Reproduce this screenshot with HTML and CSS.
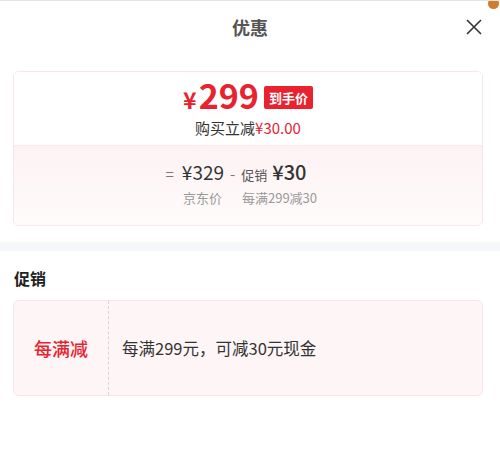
FILE: index.html
```html
<!DOCTYPE html>
<html lang="zh">
<head>
<meta charset="UTF-8">
<meta name="viewport" content="width=device-width">
<title>优惠</title>
<link rel="stylesheet" href="styles.css">
</head>
<body>
<div class="panel">
  <span class="dot"></span>
  <div class="head">
    <h3>优惠</h3>
    <svg class="close" width="18" height="18" viewBox="0 0 18 18">
      <path d="M2 2 L16 16 M16 2 L2 16" stroke="#333" stroke-width="1.6" fill="none"/>
    </svg>
  </div>

  <div class="price-card">
    <div class="final">
      <div class="final-row">
        <span class="big"><span class="yen">¥</span>299</span>
        <span class="tag">到手价</span>
      </div>
      <div class="save">购买立减<em>¥30.00</em></div>
    </div>
    <div class="calc">
      <div class="calc-row">
        <span class="op eq">=</span>
        <span class="num">¥329</span>
        <span class="op minus">-</span>
        <span class="lbl">促销</span>
        <span class="num strong">¥30</span>
      </div>
      <div class="calc-sub">
        <span class="jd">京东价</span>
        <span>每满299减30</span>
      </div>
    </div>
  </div>

  <div class="band"></div>

  <div class="sec-title">促销</div>
  <div class="promo">
    <div class="promo-type">每满减</div>
    <div class="promo-desc">每满299元，可减30元现金</div>
  </div>
</div>
</body>
</html>
```

FILE: styles.css
```css
body {
  margin: 0;
  background-color: #ffffff;
  font-family: "Noto Sans CJK SC", "Noto Sans", sans-serif;
  color: #333333;
}
.panel {
  position: relative;
  width: 500px;
  height: 455px;
  border-top: 1px solid #e4e4e4;
  overflow: hidden;
}
.dot {
  position: absolute;
  top: -3px;
  right: 1px;
  width: 11px;
  height: 11px;
  border-radius: 50%;
  background-color: #d17c2a;
}
.head {
  position: relative;
  height: 51px;
  display: flex;
  align-items: center;
  justify-content: center;
}
.head h3 {
  margin: 0;
  font-size: 18px;
  font-weight: bold;
  color: #555555;
}
.close {
  position: absolute;
  right: 17px;
  top: 17px;
}
.price-card {
  margin: 19px 17px 0 13px;
  border: 1px solid #f8e6e8;
  border-radius: 6px;
  overflow: hidden;
}
.final {
  height: 73px;
  box-sizing: border-box;
  padding-top: 8px;
  display: flex;
  flex-direction: column;
  align-items: center;
  background-color: #ffffff;
}
.final-row {
  display: flex;
  align-items: center;
  height: 34px;
  margin-bottom: 4px;
}
.big {
  color: #e8222f;
  font-size: 34px;
  font-weight: bold;
  line-height: 34px;
}
.yen {
  font-size: 23px;
  margin-right: 2px;
}
.tag {
  margin-left: 5px;
  background-color: #e8222f;
  color: #ffffff;
  font-size: 13px;
  font-weight: bold;
  padding: 0 5px;
  height: 23px;
  line-height: 23px;
  border-radius: 2px;
}
.save {
  font-size: 15px;
  line-height: 20px;
  color: #333333;
}
.save em {
  font-style: normal;
  color: #e8222f;
}
.calc {
  height: 80px;
  box-sizing: border-box;
  padding-bottom: 4px;
  display: flex;
  flex-direction: column;
  align-items: center;
  justify-content: center;
  background: linear-gradient(#fdf2f3, #fffbfb);
  border-top: 1px solid #fbecee;
}
.calc-row {
  display: flex;
  align-items: baseline;
  line-height: 26px;
  margin-right: 24px;
}
.op {
  color: #777777;
  font-size: 15px;
}
.eq {
  margin-right: 8px;
}
.minus {
  margin: 0 6px;
}
.num {
  font-size: 19px;
  color: #333333;
}
.strong {
  font-size: 20px;
  font-weight: 500;
  margin-left: 5px;
}
.lbl {
  font-size: 13px;
  color: #555555;
}
.calc-sub {
  display: flex;
  gap: 20px;
  font-size: 13px;
  color: #999999;
  line-height: 20px;
  margin-left: 4px;
}
.band {
  height: 9px;
  margin-top: 16px;
  background-color: #f6f7fb;
}
.sec-title {
  margin: 16px 0 0 14px;
  font-size: 16px;
  font-weight: bold;
  color: #222222;
  line-height: 22px;
}
.promo {
  display: flex;
  margin: 11px 17px 0 13px;
  height: 94px;
  background-color: #fef5f6;
  border: 1px solid #f8e5e8;
  border-radius: 6px;
}
.promo-type {
  width: 94px;
  display: flex;
  align-items: center;
  justify-content: center;
  border-right: 1px dashed #e6cdd1;
  font-size: 18px;
  color: #e8222f;
  font-weight: 500;
}
.promo-desc {
  display: flex;
  align-items: center;
  padding-left: 13px;
  font-size: 16.5px;
  color: #333333;
}
```
